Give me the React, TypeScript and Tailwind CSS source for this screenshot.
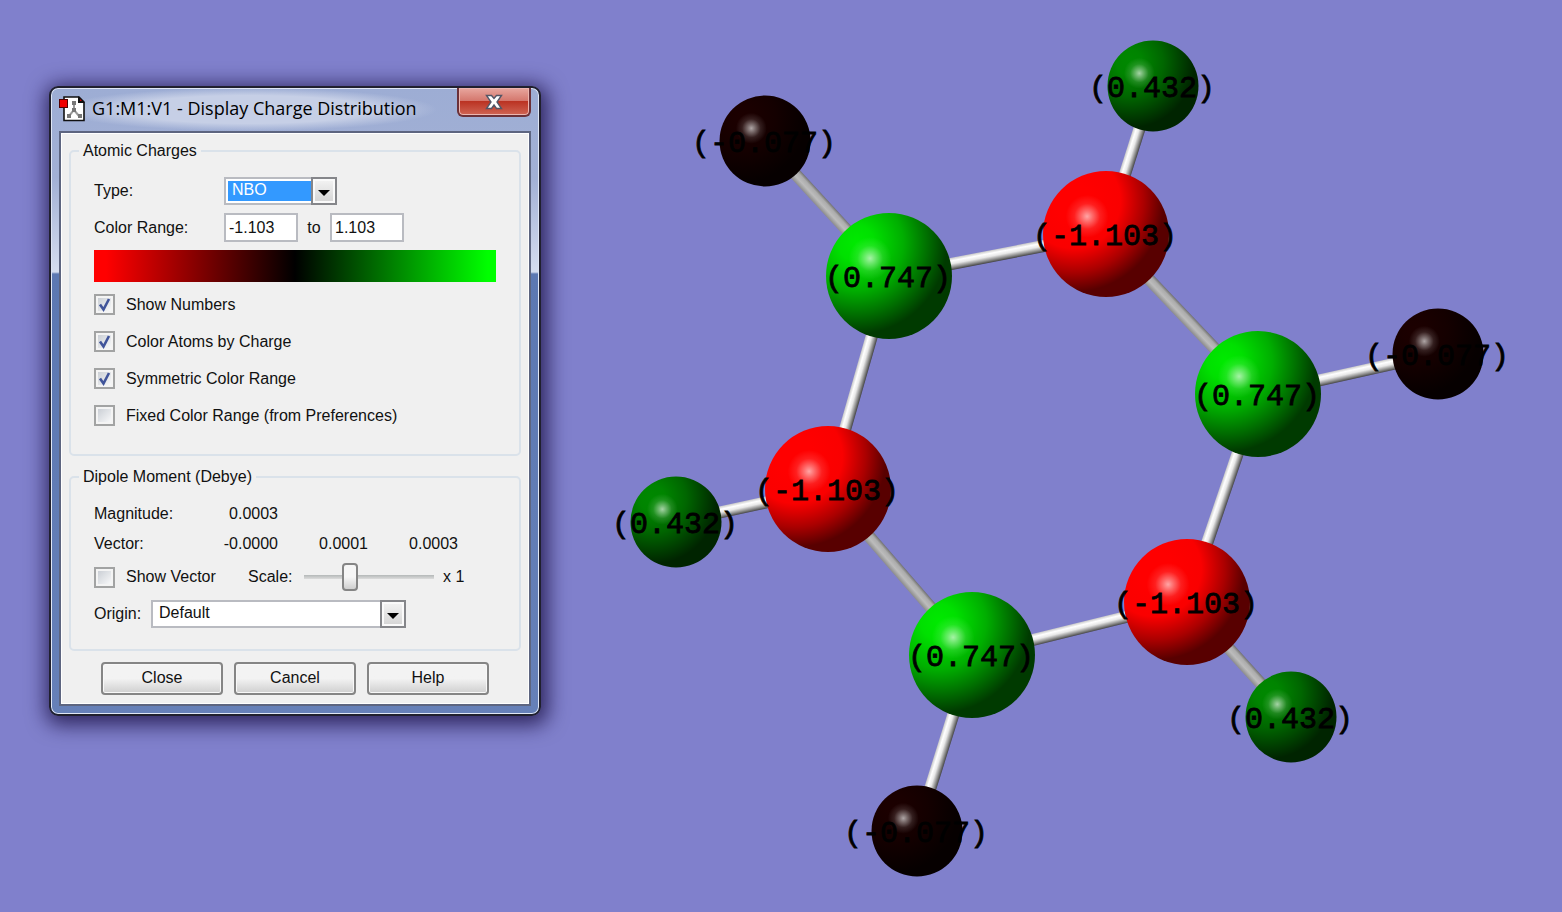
import React, { useState } from "react";

interface Atom {
  x: number;
  y: number;
  charge: string;
  kind: "hydrogen" | "ring";
  fill: string;
}

const ATOMS: Atom[] = [
  { x: 765, y: 141, charge: "(-0.077)", kind: "hydrogen", fill: "url(#black)" },
  { x: 1153, y: 86, charge: "(0.432)", kind: "hydrogen", fill: "url(#dark-green)" },
  { x: 1438, y: 354, charge: "(-0.077)", kind: "hydrogen", fill: "url(#black)" },
  { x: 676, y: 522, charge: "(0.432)", kind: "hydrogen", fill: "url(#dark-green)" },
  { x: 1291, y: 717, charge: "(0.432)", kind: "hydrogen", fill: "url(#dark-green)" },
  { x: 917, y: 831, charge: "(-0.077)", kind: "hydrogen", fill: "url(#black)" },
  { x: 889, y: 276, charge: "(0.747)", kind: "ring", fill: "url(#green)" },
  { x: 1106, y: 234, charge: "(-1.103)", kind: "ring", fill: "url(#red)" },
  { x: 1258, y: 394, charge: "(0.747)", kind: "ring", fill: "url(#green)" },
  { x: 828, y: 489, charge: "(-1.103)", kind: "ring", fill: "url(#red)" },
  { x: 1187, y: 602, charge: "(-1.103)", kind: "ring", fill: "url(#red)" },
  { x: 972, y: 655, charge: "(0.747)", kind: "ring", fill: "url(#green)" },
];

// Each bond runs left to right: start x, start y, end x, end y, shade
const BONDS: [number, number, number, number, string][] = [
  [765, 141, 889, 276, "url(#bond-gray)"],
  [889, 276, 1106, 234, "url(#bond-white)"],
  [1106, 234, 1153, 86, "url(#bond-white)"],
  [1106, 234, 1258, 394, "url(#bond-gray)"],
  [1258, 394, 1438, 354, "url(#bond-white)"],
  [1187, 602, 1258, 394, "url(#bond-white)"],
  [1187, 602, 1291, 717, "url(#bond-gray)"],
  [972, 655, 1187, 602, "url(#bond-white)"],
  [917, 831, 972, 655, "url(#bond-white)"],
  [828, 489, 972, 655, "url(#bond-gray)"],
  [676, 522, 828, 489, "url(#bond-white)"],
  [828, 489, 889, 276, "url(#bond-white)"],
];

const SHADES = [
  { id: "green", stops: ["#00ea00", "#00e000", "#00ae00", "#007000", "#003a00"] },
  { id: "red", stops: ["#ff0000", "#ff0000", "#fa0000", "#aa0000", "#580000"] },
  { id: "dark-green", stops: ["#008800", "#008400", "#006600", "#004200", "#002400"] },
  { id: "black", stops: ["#1c0000", "#1a0000", "#140000", "#0c0000", "#060000"] },
];

const OFFSETS = ["0", "0.2", "0.52", "0.78", "1"];

const Molecule: React.FC<{ showNumbers: boolean }> = ({ showNumbers }) => {
  return (
    <svg
      viewBox="541 0 1021 912"
      className="block h-auto w-full"
      role="img"
      aria-label="Molecule"
    >
      <defs>
        {SHADES.map((shade) => (
          <radialGradient key={shade.id} id={shade.id} cx="0.24" cy="0.24" r="0.72">
            {shade.stops.map((color, index) => (
              <stop key={index} offset={OFFSETS[index]} stopColor={color} />
            ))}
          </radialGradient>
        ))}
        <radialGradient id="shine">
          <stop offset="0" stopColor="#fff" stopOpacity="0.65" />
          <stop offset="0.25" stopColor="#fff" stopOpacity="0.42" />
          <stop offset="0.6" stopColor="#fff" stopOpacity="0.12" />
          <stop offset="1" stopColor="#fff" stopOpacity="0" />
        </radialGradient>
        <linearGradient id="bond-white" x1="0" y1="0" x2="0" y2="1">
          <stop offset="0" stopColor="#c8c8c8" />
          <stop offset="0.25" stopColor="#ffffff" />
          <stop offset="0.5" stopColor="#e8e8e8" />
          <stop offset="0.8" stopColor="#8a8a8a" />
          <stop offset="1" stopColor="#444444" />
        </linearGradient>
        <linearGradient id="bond-gray" x1="0" y1="0" x2="0" y2="1">
          <stop offset="0" stopColor="#707070" />
          <stop offset="0.25" stopColor="#acacac" />
          <stop offset="0.6" stopColor="#bcbcbc" />
          <stop offset="1" stopColor="#8c8c8c" />
        </linearGradient>
      </defs>

      {BONDS.map(([x1, y1, x2, y2, fill], index) => (
        <rect
          key={index}
          x="0"
          y="-6"
          width={Math.hypot(x2 - x1, y2 - y1)}
          height="12"
          fill={fill}
          transform={`translate(${x1} ${y1}) rotate(${
            (Math.atan2(y2 - y1, x2 - x1) * 180) / Math.PI
          })`}
        />
      ))}

      {ATOMS.map((atom, index) => {
        const r = atom.kind === "ring" ? 63 : 45.5;
        return (
          <g key={index}>
            <circle cx={atom.x} cy={atom.y} r={r} fill={atom.fill} />
            <circle
              cx={atom.x - r * 0.3}
              cy={atom.y - r * 0.28}
              r={r * 0.34}
              fill="url(#shine)"
            />
          </g>
        );
      })}

      {showNumbers &&
        ATOMS.map((atom, index) => (
          <text
            key={index}
            x={atom.x - 1}
            y={atom.y + 11}
            textAnchor="middle"
            className="fill-black stroke-black stroke-[0.8px] font-['Liberation_Mono',monospace] text-[30px]"
          >
            {atom.charge}
          </text>
        ))}
    </svg>
  );
};

interface CheckProps {
  label: string;
  checked: boolean;
  onChange: (checked: boolean) => void;
}

const Check: React.FC<CheckProps> = ({ label, checked, onChange }) => {
  return (
    <label className="flex items-center gap-[11px]">
      <span className="relative flex">
        <input
          type="checkbox"
          checked={checked}
          onChange={(e) => onChange(e.target.checked)}
          className="peer size-[21px] appearance-none border-2 border-[#a2a3a3] bg-linear-to-br from-[#c4c9d0] to-white shadow-[inset_0_0_0_2px_#f4f4f4]"
        />
        <svg
          viewBox="0 0 21 21"
          className="pointer-events-none invisible absolute inset-0 peer-checked:visible"
        >
          <path d="M6 10.5L9.5 15.5L15 5" fill="none" stroke="#40549a" strokeWidth="2.6" />
        </svg>
      </span>
      {label}
    </label>
  );
};

// Raised arrow box that covers the end of a drop-down
const ArrowBox: React.FC = () => {
  return (
    <span className="pointer-events-none absolute inset-y-0 right-0 flex w-[26px] items-center justify-center border-2 border-[#85868a] bg-linear-to-b from-[#f4f4f4] to-[#d4d4d4] shadow-[inset_0_0_0_2px_#fafafa]">
      <svg viewBox="0 0 12 6" className="mt-1 h-[6px] w-[12px]">
        <path d="M0 0H12L6 6Z" />
      </svg>
    </span>
  );
};

const inputClass =
  "h-[29px] w-[74px] border-2 border-[#b9bbc1] bg-white px-[3px] outline-none";
const groupClass = "rounded-[5px] border-2 border-[#dae2ea] pl-[23px] pr-[23px]";
const buttonClass =
  "h-[33px] w-[122px] rounded-[4px] border-2 border-[#858585] bg-linear-to-b from-[#f3f3f3] from-50% to-[#cfcfcf] pb-[2px] shadow-[inset_0_0_0_1px_#f8f8f8]";

const ChargeDialog: React.FC<{
  showNumbers: boolean;
  setShowNumbers: (value: boolean) => void;
}> = ({ showNumbers, setShowNumbers }) => {
  const [colorAtoms, setColorAtoms] = useState(true);
  const [symmetric, setSymmetric] = useState(true);
  const [fixedRange, setFixedRange] = useState(false);
  const [showVector, setShowVector] = useState(false);

  return (
    <section
      aria-label="Display Charge Distribution"
      className="relative w-[492px] rounded-[9px] border-2 border-[#20202e] bg-[linear-gradient(#9dadd4_0,#a2b0d5_90px,#d5ddef_184px,#5c78b2_186px,#6680b8)] px-[8px] pb-[8px] shadow-[2px_4px_20px_5px_rgba(20,10,60,0.75),inset_0_0_0_1px_#dfe6f4]"
    >
      <header className="flex h-[43px] justify-between">
        <div className="flex items-center gap-[6px] bg-[radial-gradient(closest-side,#c6cfe6_65%,transparent)] pb-[3px]">
          <svg viewBox="0 0 27 27" className="size-[27px]">
            <path d="M5 2H20L25 7V25.500H5Z" fill="#fff" stroke="#111" strokeWidth="1.6" />
            <path d="M19 1L26 8H19Z" fill="#111" />
            <path d="M21 4L23 6H21Z" fill="#c00" />
            <path d="M15 8V15L10 21M15 15L20 21" fill="none" stroke="#999" strokeWidth="2" />
            <g fill="#777">
              <rect x="13" y="6" width="4" height="4" />
              <rect x="13" y="13" width="4" height="4" />
              <rect x="8" y="19" width="4" height="4" />
              <rect x="19" y="19" width="4" height="4" />
            </g>
            <rect x="0.500" y="4.500" width="8" height="8" fill="#f00000" stroke="#500" />
          </svg>
          <h1 className="pr-5 font-['Open_Sans',sans-serif] text-lg leading-6">
            G1:M1:V1 - Display Charge Distribution
          </h1>
        </div>
        <button
          type="button"
          aria-label="Close window"
          className="flex h-[29px] w-[74px] items-center justify-center rounded-b-[6px] border-2 border-t-0 border-[#6b3038] bg-[linear-gradient(#e8a79f,#d4766c_48%,#bb3323_50%,#cf6554)] shadow-[inset_0_0_0_1px_#ecb6b0]"
        >
          <svg viewBox="0 0 18 16" className="h-[16px] w-[18px]">
            <path
              d="M1.500 1.500H6.500L9 4.500L11.500 1.500H16.500L12 8L16.500 14.500H11.500L9 11L6.500 14.500H1.500L6 8Z"
              fill="#fff"
              stroke="#535666"
              strokeWidth="1.400"
            />
          </svg>
        </button>
      </header>

      <form
        onSubmit={(e) => e.preventDefault()}
        className="border-2 border-[#5d6580] bg-[#f0f0f0] px-[8px] pb-[9px] pt-[8px] font-['Liberation_Sans',Arial,sans-serif] text-base leading-5 text-[#111] shadow-[inset_0_0_0_1px_#fff]"
      >
        <fieldset className={`${groupClass} pb-[20px] pt-[16px]`}>
          <legend className="-ml-[15px] px-[4px]">Atomic Charges</legend>
          <div className="flex items-center">
            <label htmlFor="type" className="w-[130px]">
              Type:
            </label>
            <span className="relative flex">
              <select
                id="type"
                defaultValue="NBO"
                className="h-[28px] w-[113px] appearance-none border-2 border-[#b9bbc1] bg-[#3399ff] px-[6px] pb-[2px] text-white shadow-[inset_0_0_0_2px_#fff] outline-none"
              >
                <option>NBO</option>
                <option>Mulliken</option>
              </select>
              <ArrowBox />
            </span>
          </div>
          <div className="mt-[8px] flex items-center">
            <label htmlFor="range-min" className="w-[130px]">
              Color Range:
            </label>
            <input id="range-min" defaultValue="-1.103" className={inputClass} />
            <label htmlFor="range-max" className="w-[32px] text-center">
              to
            </label>
            <input id="range-max" defaultValue="1.103" className={inputClass} />
          </div>
          <div className="mb-[4px] mt-[8px] h-[32px] bg-[linear-gradient(90deg,#f00_3%,#000_50%,#0f0_98%)]" />
          <div className="grid auto-rows-[37px] items-center">
            <Check label="Show Numbers" checked={showNumbers} onChange={setShowNumbers} />
            <Check label="Color Atoms by Charge" checked={colorAtoms} onChange={setColorAtoms} />
            <Check label="Symmetric Color Range" checked={symmetric} onChange={setSymmetric} />
            <Check
              label="Fixed Color Range (from Preferences)"
              checked={fixedRange}
              onChange={setFixedRange}
            />
          </div>
        </fieldset>

        <fieldset className={`${groupClass} mt-[11px] pb-[16px] pt-[12px]`}>
          <legend className="-ml-[15px] px-[4px]">Dipole Moment (Debye)</legend>
          <dl className="grid auto-rows-[30px] grid-cols-[110px_74px_90px_90px] items-center text-right">
            <dt className="text-left">Magnitude:</dt>
            <dd>0.0003</dd>
            <dt className="col-start-1 text-left">Vector:</dt>
            <dd>-0.0000</dd>
            <dd>0.0001</dd>
            <dd>0.0003</dd>
          </dl>
          <div className="flex h-[36px] items-center">
            <div className="w-[154px]">
              <Check label="Show Vector" checked={showVector} onChange={setShowVector} />
            </div>
            <label htmlFor="scale" className="w-[56px]">
              Scale:
            </label>
            <input
              id="scale"
              type="range"
              min="0"
              max="100"
              defaultValue="33"
              className="h-[28px] w-[130px] appearance-none bg-transparent bg-[linear-gradient(#b4b8b8,#dcdcdc)] bg-size-[100%_4px] bg-center bg-no-repeat [&::-webkit-slider-thumb]:h-[28px] [&::-webkit-slider-thumb]:w-[16px] [&::-webkit-slider-thumb]:appearance-none [&::-webkit-slider-thumb]:rounded-[4px] [&::-webkit-slider-thumb]:border-2 [&::-webkit-slider-thumb]:border-[#858585] [&::-webkit-slider-thumb]:bg-linear-to-b [&::-webkit-slider-thumb]:from-[#f6f6f6] [&::-webkit-slider-thumb]:from-50% [&::-webkit-slider-thumb]:to-[#cfcfcf]"
            />
            <output htmlFor="scale" className="pl-[9px]">
              x 1
            </output>
          </div>
          <div className="flex h-[38px] items-center">
            <label htmlFor="origin" className="w-[57px]">
              Origin:
            </label>
            <span className="relative flex">
              <select
                id="origin"
                className="h-[28px] w-[255px] appearance-none border-2 border-[#b9bbc1] bg-white px-[6px] pb-[2px] outline-none"
              >
                <option>Default</option>
              </select>
              <ArrowBox />
            </span>
          </div>
        </fieldset>

        <div className="mt-[11px] flex justify-center gap-[11px]">
          <button type="button" className={buttonClass}>
            Close
          </button>
          <button type="button" className={buttonClass}>
            Cancel
          </button>
          <button type="button" className={buttonClass}>
            Help
          </button>
        </div>
      </form>
    </section>
  );
};

const App: React.FC = () => {
  const [showNumbers, setShowNumbers] = useState(true);

  return (
    <main className="flex min-h-screen items-start bg-[#8080cc] pl-[49px]">
      <div className="z-10 shrink-0 pt-[86px]">
        <ChargeDialog showNumbers={showNumbers} setShowNumbers={setShowNumbers} />
      </div>
      <div className="min-w-0 flex-1">
        <Molecule showNumbers={showNumbers} />
      </div>
    </main>
  );
};

export default App;
